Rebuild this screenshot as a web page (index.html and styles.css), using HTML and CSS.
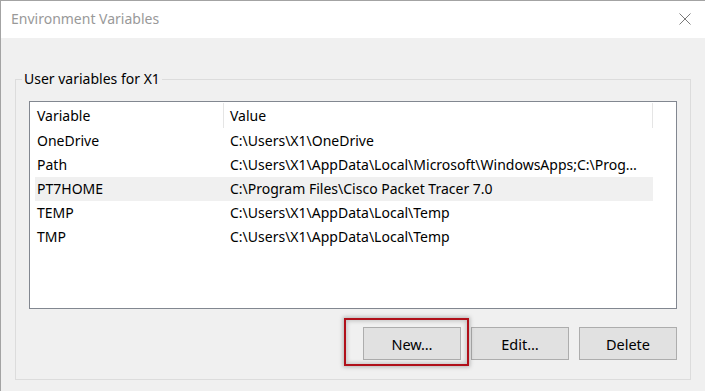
FILE: index.html
```html
<!DOCTYPE html>
<html lang="en">
<head>
<meta charset="utf-8">
<title>Environment Variables</title>
<link rel="stylesheet" href="styles.css">
</head>
<body>
<div class="window">
  <div class="titlebar">
    <span class="title">Environment Variables</span>
    <svg class="close" width="12" height="12" viewBox="0 0 12 12">
      <path d="M0.5 0.5 L11.5 11.5 M11.5 0.5 L0.5 11.5" stroke="#7a7a7a" stroke-width="1" fill="none"/>
    </svg>
  </div>
  <div class="body">
    <fieldset class="group">
      <legend class="legend">User variables for X1</legend>
      <div class="list">
        <div class="header">
          <div class="hcell first">Variable</div>
          <div class="hcell">Value</div>
          <div class="hcell last"></div>
        </div>
        <div class="rows">
          <div class="row"><span class="name">OneDrive</span><span class="value">C:\Users\X1\OneDrive</span></div>
          <div class="row"><span class="name">Path</span><span class="value">C:\Users\X1\AppData\Local\Microsoft\WindowsApps;C:\Prog…</span></div>
          <div class="row selected"><span class="name">PT7HOME</span><span class="value">C:\Program Files\Cisco Packet Tracer 7.0</span></div>
          <div class="row"><span class="name">TEMP</span><span class="value">C:\Users\X1\AppData\Local\Temp</span></div>
          <div class="row"><span class="name">TMP</span><span class="value">C:\Users\X1\AppData\Local\Temp</span></div>
        </div>
      </div>
      <div class="buttons">
        <button class="btn highlighted">New…</button>
        <button class="btn">Edit…</button>
        <button class="btn">Delete</button>
      </div>
    </fieldset>
  </div>
</div>
</body>
</html>
```

FILE: styles.css
```css
* { box-sizing: border-box; }
html, body { margin: 0; padding: 0; }
body {
  width: 705px;
  height: 391px;
  overflow: hidden;
  font-family: "Noto Sans", "Open Sans", sans-serif;
  font-size: 14px;
  color: #000;
  background: #f0f0f0;
}
.window {
  height: 391px;
  border-left: 1px solid #a3a3a3;
  border-top: 1px solid #a3a3a3;
  display: flex;
  flex-direction: column;
}
.titlebar {
  height: 37px;
  background: #fff;
  display: flex;
  align-items: center;
  padding-left: 10px;
  padding-right: 14px;
  justify-content: space-between;
  flex-shrink: 0;
}
.title {
  color: #999;
  font-size: 14px;
  margin-top: -2px;
}
.close { margin-top: -1px; }
.body {
  flex: 1;
  background: #f0f0f0;
  padding: 31px 14px 11px 14px;
}
.group {
  margin: 0;
  border: 1px solid #dcdcdc;
  padding: 0 13px 18px 13px;
  height: 100%;
  display: flex;
  flex-direction: column;
}
.legend {
  margin-left: -7px;
  padding: 0 2px;
  font-size: 14px;
  line-height: 20px;
}
.list {
  margin-top: 12px;
  height: 208px;
  border: 1px solid #828790;
  background: #fff;
}
.header {
  display: grid;
  grid-template-columns: 194px 429px 1fr;
  height: 27px;
  padding: 1px 0;
}
.hcell {
  border-right: 1px solid #e5e5e5;
  padding-left: 6px;
  line-height: 25px;
}
.hcell.first { padding-left: 7px; }
.hcell.last { border-right: 0; }
.rows {
  margin-left: 5px;
  width: 618px;
}
.row {
  display: grid;
  grid-template-columns: 189px 429px;
  height: 24px;
  line-height: 24px;
}
.row.selected { background: #f0f0f0; }
.name { padding-left: 2px; }
.value {
  padding-left: 6px;
  white-space: nowrap;
}
.buttons {
  margin-top: 18px;
  display: flex;
  justify-content: flex-end;
  gap: 10px;
}
.btn {
  width: 98px;
  height: 33px;
  background: #e1e1e1;
  border: 1px solid #adadad;
  border-radius: 0;
  font-family: "Noto Sans", "Open Sans", sans-serif;
  font-size: 14.5px;
  color: #000;
  padding: 0;
}
.highlighted { position: relative; }
.highlighted::after {
  content: "";
  position: absolute;
  left: -20px;
  top: -10px;
  right: -9px;
  bottom: -7px;
  border: 2px solid #b0101a;
  box-shadow: 0 0 4px 1px rgba(0,0,0,0.25), inset 0 0 4px 1px rgba(0,0,0,0.2);
}
```
